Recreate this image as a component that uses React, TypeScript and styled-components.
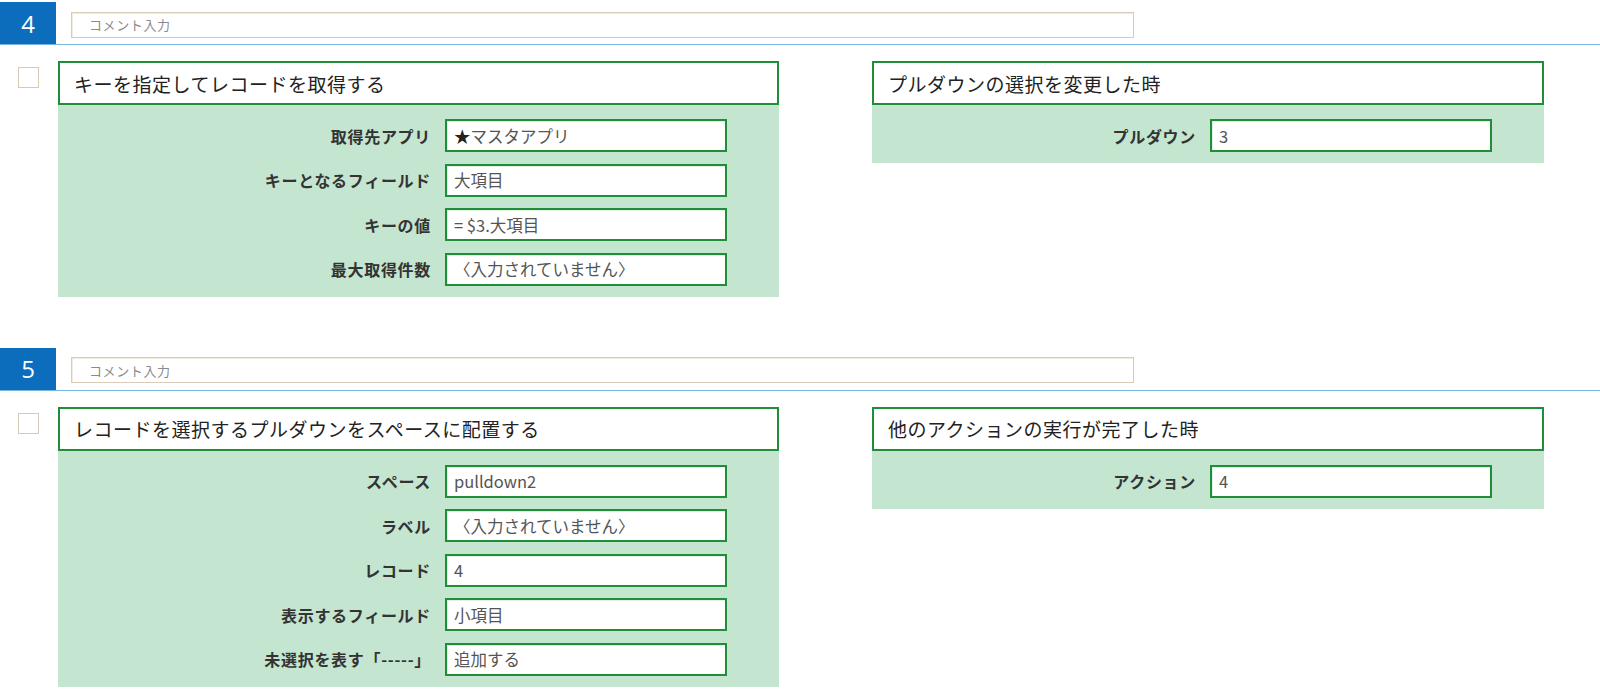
import React from "react";
import styled, { createGlobalStyle } from "styled-components";

const GlobalStyle = createGlobalStyle`
  html, body {
    margin: 0;
    padding: 0;
    background: #ffffff;
    font-family: "Noto Sans CJK JP", "Noto Sans", sans-serif;
    color: #222;
  }
  * { box-sizing: border-box; }
`;

const Page = styled.div`
  display: flex;
  flex-direction: column;
  gap: 51px;
  padding-top: 2px;
  width: 1600px;
`;

const Section = styled.section`
  display: flex;
  flex-direction: column;
`;

const Header = styled.div`
  display: flex;
  align-items: center;
  height: 43px;
  border-bottom: 1px solid #79b6e2;
  gap: 15px;
`;

const Badge = styled.div`
  width: 56px;
  height: 42px;
  align-self: flex-start;
  background: #0b6dbb;
  color: #fff;
  font-family: "Open Sans", "Noto Sans", sans-serif;
  font-size: 24px;
  display: flex;
  align-items: center;
  justify-content: center;
`;

const Comment = styled.div`
  width: 1063px;
  height: 26px;
  margin-top: 3px;
  border: 1px solid #d9cbb8;
  box-shadow: inset 1px 1px 0 #f2ebe1;
  background: #fff;
  font-size: 13px;
  letter-spacing: 0.6px;
  color: #8a8a8a;
  padding-left: 17px;
  display: flex;
  align-items: center;
`;

const Body = styled.div`
  display: flex;
  align-items: flex-start;
  padding-top: 16px;
`;

const CheckCell = styled.div`
  width: 58px;
  display: flex;
  padding-left: 18px;
  padding-top: 6px;
`;

const Check = styled.div`
  width: 21px;
  height: 21px;
  border: 1px solid #d8c9b5;
  background: #fff;
`;

const Card = styled.div<{ $w: number }>`
  width: ${(p) => p.$w}px;
  display: flex;
  flex-direction: column;
`;

const Gap = styled.div`
  width: 93px;
`;

const Title = styled.div`
  height: 44px;
  border: 2px solid #1f8e38;
  background: #fff;
  font-size: 19px;
  letter-spacing: 0.5px;
  color: #222;
  padding-left: 14px;
  display: flex;
  align-items: center;
`;

const Fields = styled.div`
  background: #c4e5cf;
  display: grid;
  grid-template-columns: 1fr 282px;
  column-gap: 14px;
  row-gap: 11.5px;
  padding: 14px 52px 11px 0;
  align-items: center;
`;

const Label = styled.div`
  text-align: right;
  font-size: 16px;
  letter-spacing: 0.7px;
  font-weight: 700;
  color: #333;
`;

const Input = styled.div`
  height: 33px;
  border: 2px solid #1f8e38;
  box-shadow: inset 1px 1px 0 #e3efe6;
  background: #fff;
  font-size: 16.5px;
  color: #555;
  padding-left: 7px;
  display: flex;
  align-items: center;
  white-space: nowrap;
`;

const Star = styled.span`
  color: #222;
`;

type Field = { label: string; value: React.ReactNode };

type Block = {
  no: number;
  leftTitle: string;
  leftFields: Field[];
  rightTitle: string;
  rightFields: Field[];
};

const EMPTY = "〈入力されていません〉";

const blocks: Block[] = [
  {
    no: 4,
    leftTitle: "キーを指定してレコードを取得する",
    leftFields: [
      {
        label: "取得先アプリ",
        value: (
          <>
            <Star>★</Star>マスタアプリ
          </>
        ),
      },
      { label: "キーとなるフィールド", value: "大項目" },
      { label: "キーの値", value: "= $3.大項目" },
      { label: "最大取得件数", value: EMPTY },
    ],
    rightTitle: "プルダウンの選択を変更した時",
    rightFields: [{ label: "プルダウン", value: "3" }],
  },
  {
    no: 5,
    leftTitle: "レコードを選択するプルダウンをスペースに配置する",
    leftFields: [
      { label: "スペース", value: "pulldown2" },
      { label: "ラベル", value: EMPTY },
      { label: "レコード", value: "4" },
      { label: "表示するフィールド", value: "小項目" },
      { label: "未選択を表す「-----」", value: "追加する" },
    ],
    rightTitle: "他のアクションの実行が完了した時",
    rightFields: [{ label: "アクション", value: "4" }],
  },
];

const FieldList: React.FC<{ fields: Field[] }> = ({ fields }) => (
  <Fields>
    {fields.map((f, i) => (
      <React.Fragment key={i}>
        <Label>{f.label}</Label>
        <Input>{f.value}</Input>
      </React.Fragment>
    ))}
  </Fields>
);

export default function App() {
  return (
    <>
      <GlobalStyle />
      <Page>
        {blocks.map((b) => (
          <Section key={b.no}>
            <Header>
              <Badge>{b.no}</Badge>
              <Comment>コメント入力</Comment>
            </Header>
            <Body>
              <CheckCell>
                <Check />
              </CheckCell>
              <Card $w={721}>
                <Title>{b.leftTitle}</Title>
                <FieldList fields={b.leftFields} />
              </Card>
              <Gap />
              <Card $w={672}>
                <Title>{b.rightTitle}</Title>
                <FieldList fields={b.rightFields} />
              </Card>
            </Body>
          </Section>
        ))}
      </Page>
    </>
  );
}
